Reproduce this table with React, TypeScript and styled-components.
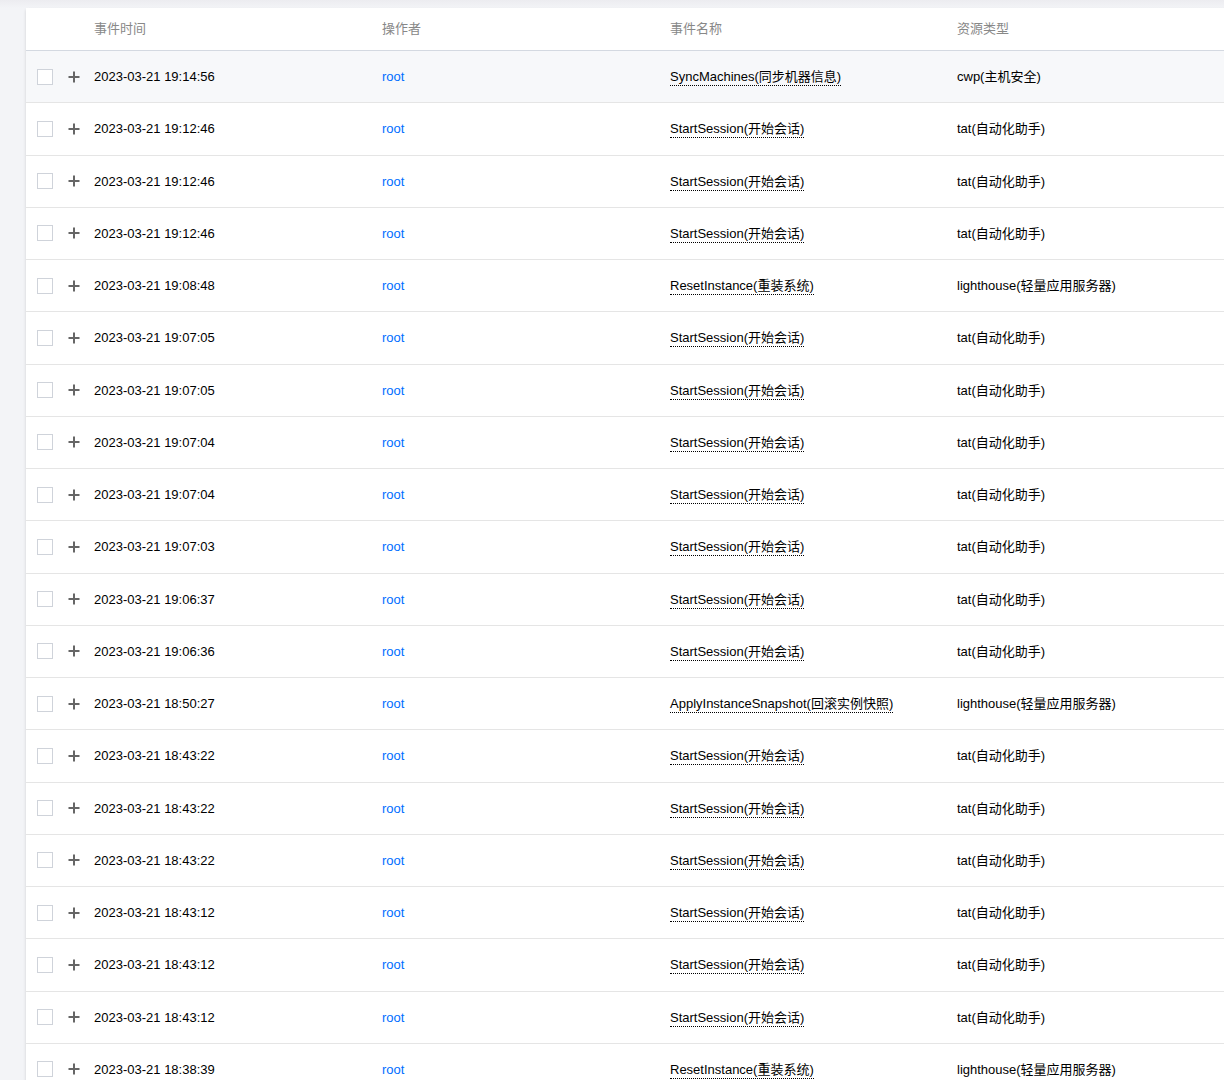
import React from "react";
import styled, { createGlobalStyle } from "styled-components";

const Global = createGlobalStyle`
  html, body { margin: 0; padding: 0; background: #f3f4f7; overflow: hidden; }
  body { font-family: "Liberation Sans", Arial, "Noto Sans CJK SC", sans-serif; font-size: 13px; color: #000; }
`;

const Page = styled.div`
  height: 1080px;
  overflow: hidden;
  padding: 8px 0 0 26px;
  box-sizing: border-box;
  background: linear-gradient(#ececf0, #f3f4f7 8px);
`;

const Card = styled.div`
  width: 1240px;
  background: #fff;
  box-shadow: 0 2px 3px rgba(0, 0, 0, 0.15);
`;

const COLS = "68px 288px 288px 287px 1fr";

const HeaderRow = styled.div`
  display: grid;
  grid-template-columns: ${COLS};
  align-items: center;
  height: 42px;
  border-bottom: 1px solid #d4d9e1;
  color: #888;
`;

const Row = styled.div<{ $hover?: boolean }>`
  display: grid;
  grid-template-columns: ${COLS};
  align-items: center;
  height: 51.26px;
  border-bottom: 1px solid #e5e5e5;
  background: ${(p) => (p.$hover ? "#f7f8fa" : "#fff")};
`;

const SelectCell = styled.div`
  display: flex;
  align-items: center;
  gap: 15px;
  padding-left: 11px;
`;

const Checkbox = styled.span`
  width: 16px;
  height: 16px;
  box-sizing: border-box;
  border: 1px solid #cfd3da;
  background: #fff;
  display: inline-block;
`;

const Cell = styled.div<{ $nudge?: boolean }>`
  white-space: nowrap;
  line-height: 18px;
  padding-top: ${(p) => (p.$nudge ? "1px" : "0")};
`;

const Link = styled.span`
  color: #006eff;
`;

const Dotted = styled.span`
  display: inline-block;
  line-height: 16px;
  border-bottom: 1px dotted #000;
`;

const PlusIcon = () => (
  <svg width="12" height="12" viewBox="0 0 12 12" style={{ display: "block" }}>
    <path d="M6 0.5v11M0.5 6h11" stroke="#666" strokeWidth="2" fill="none" />
  </svg>
);

const SS = ["StartSession(开始会话)", "tat(自动化助手)"];
const RI = ["ResetInstance(重装系统)", "lighthouse(轻量应用服务器)"];

const rows: [string, string, string][] = [
  ["19:14:56", "SyncMachines(同步机器信息)", "cwp(主机安全)"],
  ["19:12:46", SS[0], SS[1]],
  ["19:12:46", SS[0], SS[1]],
  ["19:12:46", SS[0], SS[1]],
  ["19:08:48", RI[0], RI[1]],
  ["19:07:05", SS[0], SS[1]],
  ["19:07:05", SS[0], SS[1]],
  ["19:07:04", SS[0], SS[1]],
  ["19:07:04", SS[0], SS[1]],
  ["19:07:03", SS[0], SS[1]],
  ["19:06:37", SS[0], SS[1]],
  ["19:06:36", SS[0], SS[1]],
  ["18:50:27", "ApplyInstanceSnapshot(回滚实例快照)", RI[1]],
  ["18:43:22", SS[0], SS[1]],
  ["18:43:22", SS[0], SS[1]],
  ["18:43:22", SS[0], SS[1]],
  ["18:43:12", SS[0], SS[1]],
  ["18:43:12", SS[0], SS[1]],
  ["18:43:12", SS[0], SS[1]],
  ["18:38:39", RI[0], RI[1]],
];

export default function App() {
  return (
    <>
      <Global />
      <Page>
        <Card>
          <HeaderRow>
            <div />
            <Cell>事件时间</Cell>
            <Cell>操作者</Cell>
            <Cell>事件名称</Cell>
            <Cell>资源类型</Cell>
          </HeaderRow>
          {rows.map(([t, name, type], i) => (
            <Row key={i} $hover={i === 0}>
              <SelectCell>
                <Checkbox />
                <PlusIcon />
              </SelectCell>
              <Cell $nudge>2023-03-21 {t}</Cell>
              <Cell $nudge>
                <Link>root</Link>
              </Cell>
              <Cell $nudge>
                <Dotted>{name}</Dotted>
              </Cell>
              <Cell $nudge>{type}</Cell>
            </Row>
          ))}
        </Card>
      </Page>
    </>
  );
}
